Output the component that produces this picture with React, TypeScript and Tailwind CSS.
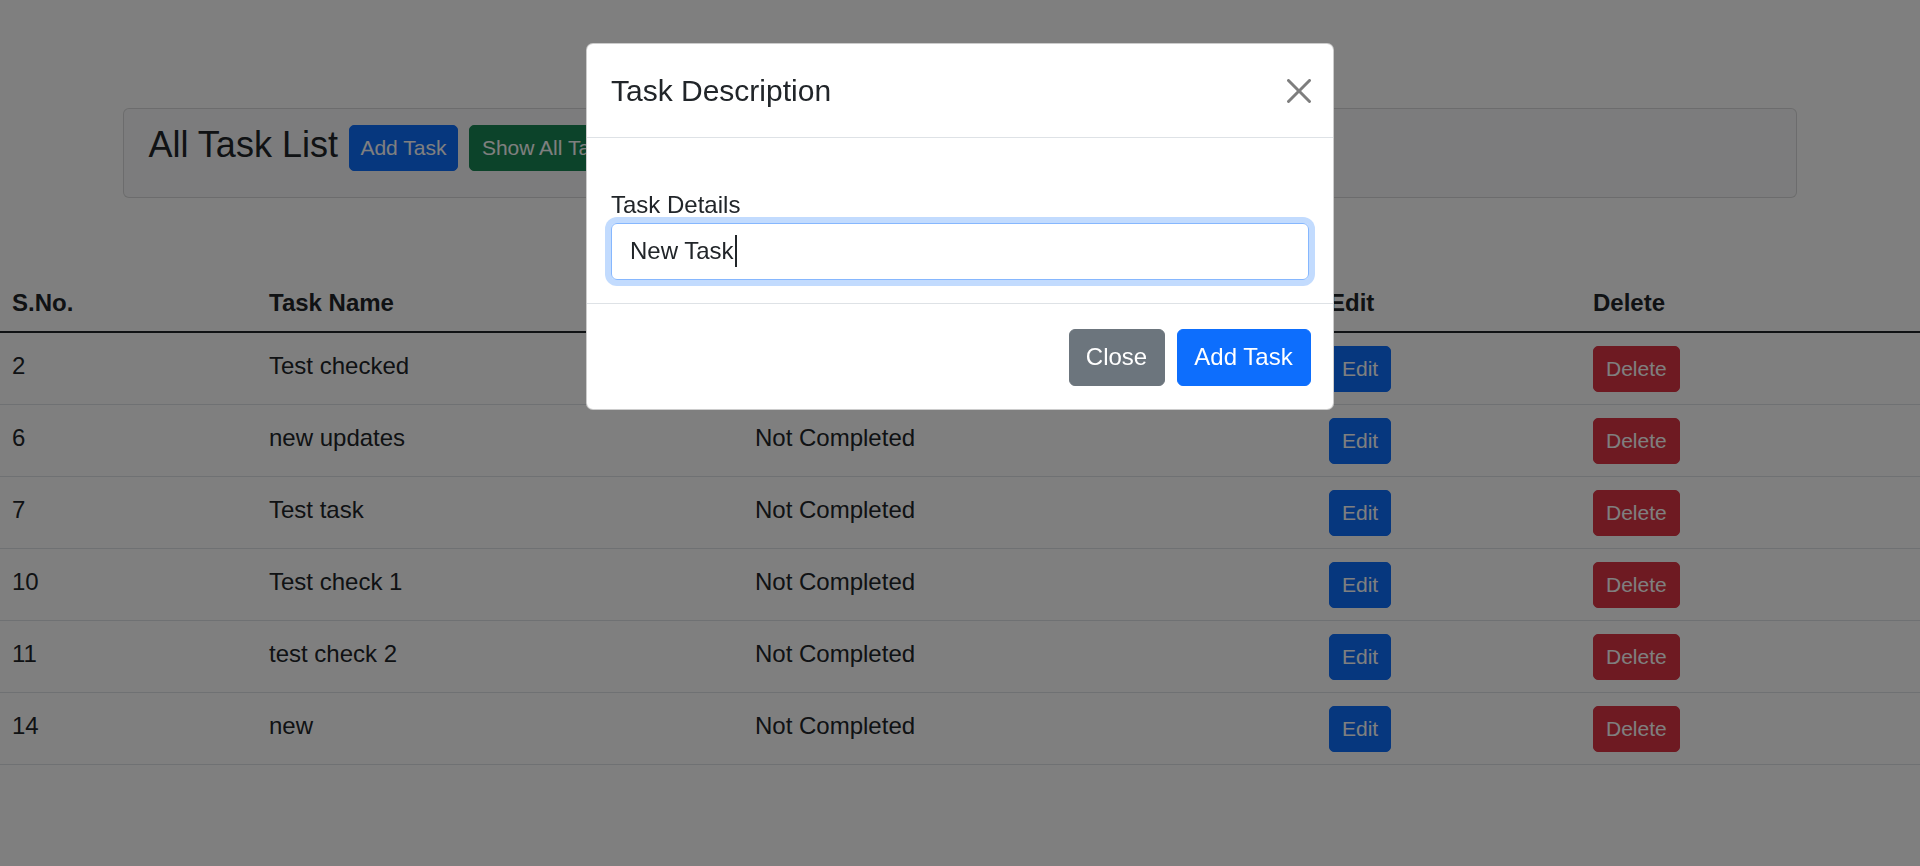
import React from "react";

const tasks = [
  { id: 2, name: "Test checked", status: "Completed" },
  { id: 6, name: "new updates", status: "Not Completed" },
  { id: 7, name: "Test task", status: "Not Completed" },
  { id: 10, name: "Test check 1", status: "Not Completed" },
  { id: 11, name: "test check 2", status: "Not Completed" },
  { id: 14, name: "new", status: "Not Completed" },
];

function CloseIcon() {
  return (
    <svg width="24" height="24" viewBox="0 0 16 16" fill="#000" className="opacity-50">
      <path d="M.293.293a1 1 0 011.414 0L8 6.586 14.293.293a1 1 0 111.414 1.414L9.414 8l6.293 6.293a1 1 0 01-1.414 1.414L8 9.414l-6.293 6.293a1 1 0 01-1.414-1.414L6.586 8 .293 1.707a1 1 0 010-1.414z" />
    </svg>
  );
}

function TaskModal() {
  return (
    <div className="fixed left-[586px] top-[43px] w-[748px] rounded-[7px] border-[1.5px] border-black/20 bg-white">
      <div className="flex h-[94px] items-center justify-between border-b-[1.5px] border-[#dee2e6] pl-[24px] pr-[22px]">
        <h5 className="text-[30px] font-medium leading-[45px] text-[#212529]">Task Description</h5>
        <button className="flex h-[24px] w-[24px] items-center justify-center">
          <CloseIcon />
        </button>
      </div>
      <div className="px-[24px] pb-[23px] pt-[48.5px]">
        <label className="block text-[24px] leading-[36px] text-[#212529]">Task Details</label>
        <div className="flex h-[57px] items-center rounded-[6px] border-[1.5px] border-[#86b7fe] px-[18px] text-[24px] text-[#212529] shadow-[0_0_0_6px_rgba(13,110,253,0.25)]">
          <span>New Task</span>
          <span className="ml-[1px] inline-block h-[32px] w-[2px] bg-[#212529]" />
        </div>
      </div>
      <div className="flex justify-end gap-[12px] border-t-[1.5px] border-[#dee2e6] pb-[23px] pr-[22.5px] pt-[25px]">
        <button className="h-[57px] w-[96px] rounded-[6px] border-[1.5px] border-[#6c757d] bg-[#6c757d] text-[24px] text-white">
          Close
        </button>
        <button className="h-[57px] w-[134px] rounded-[6px] border-[1.5px] border-[#0d6efd] bg-[#0d6efd] text-[24px] text-white">
          Add Task
        </button>
      </div>
    </div>
  );
}

export default function App() {
  return (
    <div className="relative h-[866px] overflow-hidden bg-white pt-[108px] font-['Liberation_Sans',Arial,sans-serif] text-[#212529]">
      <div className="mx-auto w-[1674px]">
        <div className="box-border flex h-[90px] items-start gap-[11px] rounded-[6px] border-[1.5px] border-black/[0.125] bg-[#f8f9fa] pl-[24.5px] pr-[24px] pt-[13.5px]">
          <h4 className="mt-[1px] text-[36px] font-medium leading-[42px]">All Task List</h4>
          <button className="mt-[2px] h-[46px] w-[109px] shrink-0 rounded-[5px] border-[1.5px] border-[#0d6efd] bg-[#0d6efd] text-[21px] text-white">
            Add Task
          </button>
          <button className="mt-[2px] h-[46px] shrink-0 rounded-[5px] border-[1.5px] border-[#198754] bg-[#198754] px-[12px] text-[21px] text-white">
            Show All Tasks
          </button>
        </div>
      </div>

      <table className="mt-[73px] w-full table-fixed border-separate border-spacing-0 text-left text-[24px]">
        <colgroup>
          <col className="w-[257px]" />
          <col className="w-[486px]" />
          <col className="w-[574px]" />
          <col className="w-[264px]" />
          <col className="w-[339px]" />
        </colgroup>
        <thead>
          <tr>
            {["S.No.", "Task Name", "Status", "Edit", "Delete"].map((h) => (
              <th
                key={h}
                className="border-b-[2px] border-[#212529] px-[12px] pb-[8px] pt-[12px] align-top font-bold leading-[40px]"
              >
                {h}
              </th>
            ))}
          </tr>
        </thead>
        <tbody>
          {tasks.map((t) => (
            <tr key={t.id}>
              <td className="border-b border-[#dee2e6] px-[12px] pb-[12px] pt-[13px] align-top leading-[40px]">{t.id}</td>
              <td className="border-b border-[#dee2e6] px-[12px] pb-[12px] pt-[13px] align-top leading-[40px]">{t.name}</td>
              <td className="border-b border-[#dee2e6] px-[12px] pb-[12px] pt-[13px] align-top leading-[40px]">{t.status}</td>
              <td className="border-b border-[#dee2e6] px-[12px] pb-[12px] pt-[13px] align-top">
                <button className="h-[46px] rounded-[5px] border-[1.5px] border-[#0d6efd] bg-[#0d6efd] px-[12px] text-[21px] text-white">
                  Edit
                </button>
              </td>
              <td className="border-b border-[#dee2e6] px-[12px] pb-[12px] pt-[13px] align-top">
                <button className="h-[46px] rounded-[5px] border-[1.5px] border-[#dc3545] bg-[#dc3545] px-[12px] text-[21px] text-white">
                  Delete
                </button>
              </td>
            </tr>
          ))}
        </tbody>
      </table>

      <div className="fixed inset-0 bg-black/50" />
      <TaskModal />
    </div>
  );
}
